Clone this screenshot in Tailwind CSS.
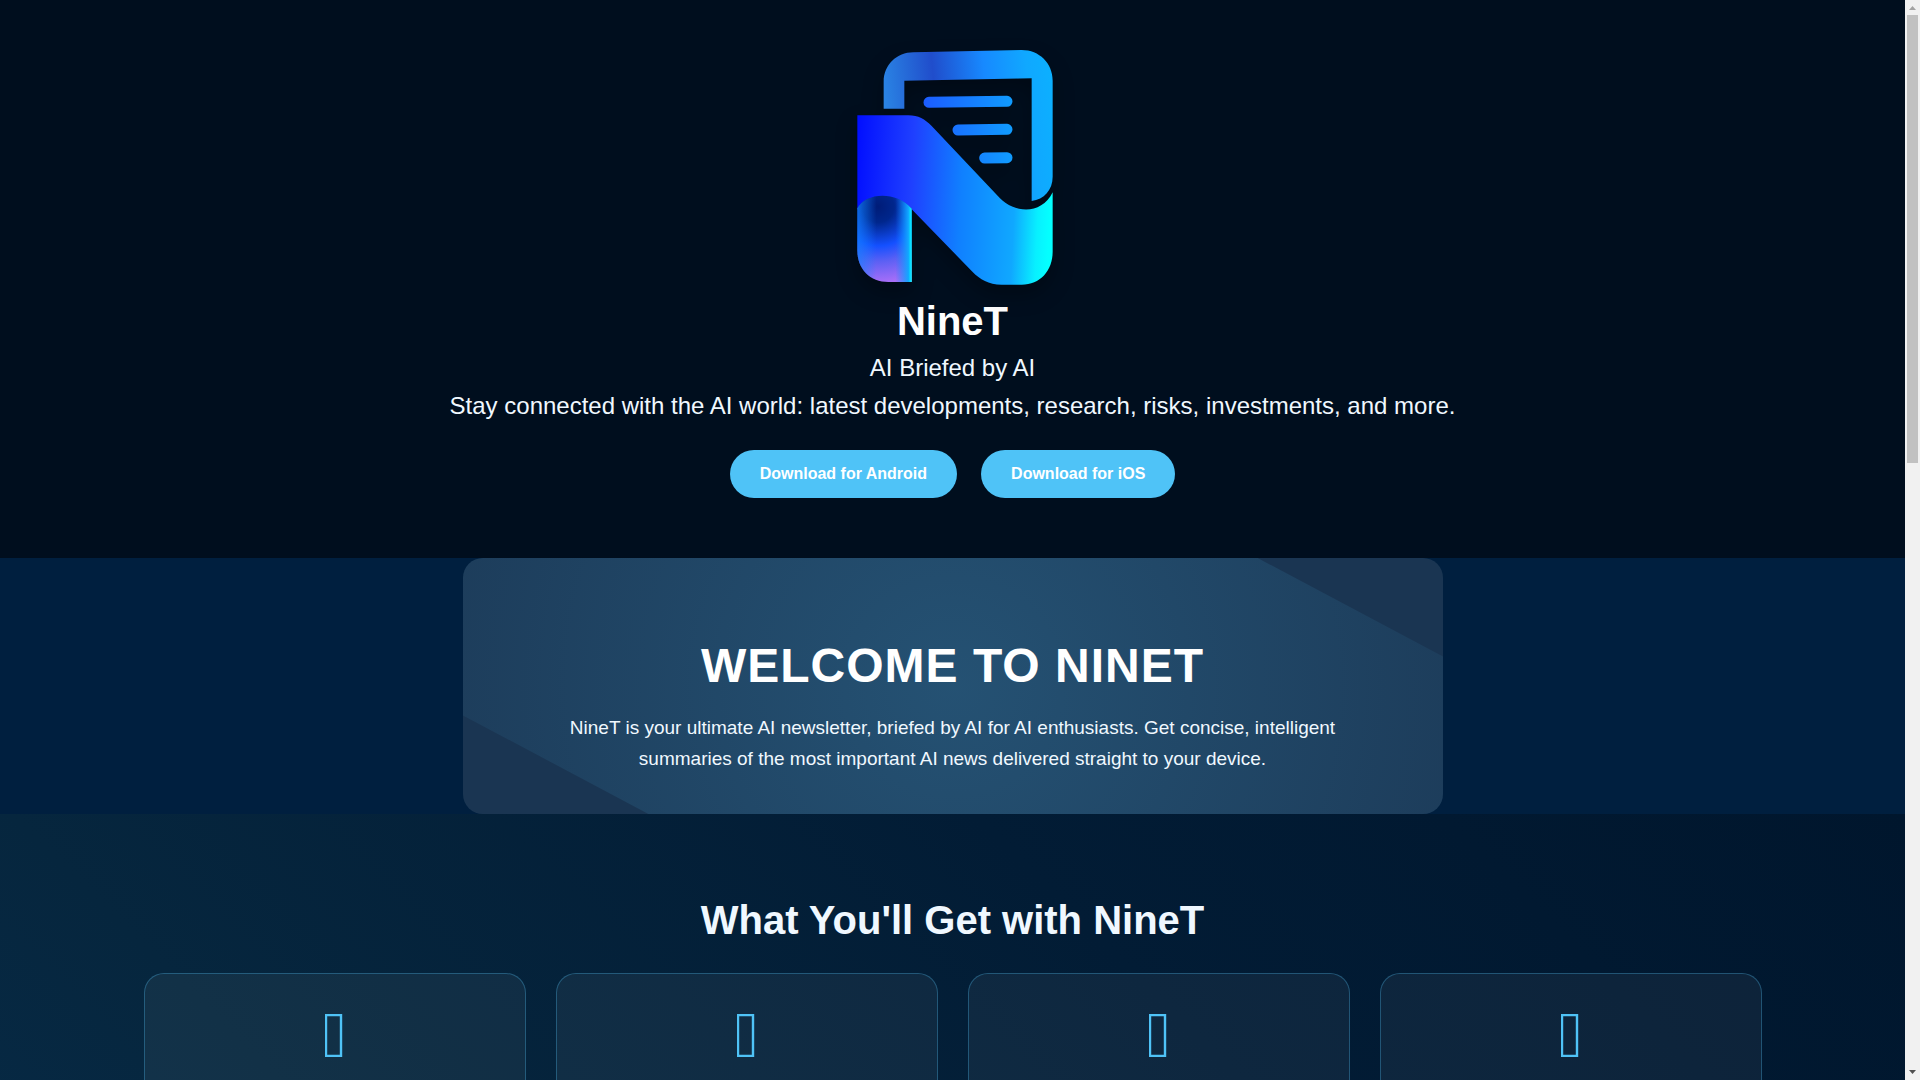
<!DOCTYPE html>
<html lang="en">
<head>
<meta charset="utf-8">
<meta name="viewport" content="width=device-width, initial-scale=1">
<title>NineT</title>
<script src="https://cdn.jsdelivr.net/npm/@tailwindcss/browser@4"></script>
</head>
<body class="h-screen overflow-hidden bg-[#001f3f] font-['Liberation_Sans',Arial,sans-serif] text-[#f0f8ff]">
<div class="flex h-full">
  <main class="min-w-0 flex-1 overflow-hidden text-center">
    <header class="flex flex-col items-center bg-[#000e1e] px-5 pt-10 pb-[60px]">
      <svg class="relative z-10 h-[255px] w-[230px] drop-shadow-[0_10px_10px_rgba(0,0,0,0.3)]" viewBox="-6 0 690 765" role="img" aria-label="NineT logo">
        <defs>
          <linearGradient id="page" x1="130" x2="638" y1="150" y2="100" gradientUnits="userSpaceOnUse">
            <stop offset="0" stop-color="#2a84e4"/><stop offset=".3" stop-color="#204dcb"/><stop offset=".6" stop-color="#1789ff"/><stop offset=".85" stop-color="#10a8ff"/><stop offset="1" stop-color="#0cb0ff"/>
          </linearGradient>
          <linearGradient id="ribbon" x1="40" x2="638" y1="330" y2="360" gradientUnits="userSpaceOnUse">
            <stop offset="0" stop-color="#000cff"/><stop offset=".3" stop-color="#1f40ff"/><stop offset=".55" stop-color="#1080ff"/><stop offset=".82" stop-color="#10a8ff"/><stop offset=".94" stop-color="#08f0ff"/><stop offset="1" stop-color="#04ffff"/>
          </linearGradient>
          <linearGradient id="lines" x1="250" x2="518" y1="0" y2="0" gradientUnits="userSpaceOnUse">
            <stop offset="0" stop-color="#1c5cff"/><stop offset="1" stop-color="#109cff"/>
          </linearGradient>
          <radialGradient id="leg" cx="115" cy="500" r="235" gradientUnits="userSpaceOnUse">
            <stop offset="0" stop-color="#001c78"/><stop offset=".2" stop-color="#00268c"/><stop offset=".5" stop-color="#1450ff"/><stop offset=".7" stop-color="#5c60f4"/><stop offset="1" stop-color="#b070f8"/>
          </radialGradient>
          <linearGradient id="rim" x1="52" x2="215" y1="0" y2="0" gradientUnits="userSpaceOnUse">
            <stop offset="0" stop-color="#1080ff" stop-opacity=".7"/><stop offset=".35" stop-color="#1080ff" stop-opacity="0"/><stop offset=".7" stop-color="#1080ff" stop-opacity="0"/><stop offset=".94" stop-color="#10a8ff"/><stop offset="1" stop-color="#04ffff"/>
          </linearGradient>
        </defs>
        <path d="M131 206V125C131 75 170 37 220 37L545 30C598 30 638 70 638 122V410C638 450 612 478 575 483V115L193 122V206Z" fill="url(#page)"/>
        <g stroke="url(#lines)" stroke-width="33" stroke-linecap="round" fill="none">
          <path d="M267 187L501 184"/><path d="M354 270L501 268"/><path d="M434 354L501 353"/>
        </g>
        <path d="M52 226H205C235 226 255 238 275 258L480 475C525 520 605 525 638 457V635C638 692 600 734 545 734H485C445 734 420 718 398 696L215 508C180 465 85 450 52 510Z" fill="url(#ribbon)"/>
        <path d="M52 505C75 460 165 450 215 506V726H145C90 726 52 688 52 630Z" fill="url(#leg)"/>
        <path d="M52 505C75 460 165 450 215 506V726H145C90 726 52 688 52 630Z" fill="url(#rim)"/>
      </svg>
      <h1 class="text-[40px] leading-[52px] font-bold text-white">NineT</h1>
      <p class="mt-0.5 text-2xl leading-[38px]">AI Briefed by AI</p>
      <p class="text-2xl leading-[38px]">Stay connected with the AI world: latest developments, research, risks, investments, and more.</p>
      <div class="mt-[25px] flex gap-6">
        <a href="#android" class="rounded-full bg-[#4fc3f7] px-[30px] py-3 font-bold text-white">Download for Android</a>
        <a href="#ios" class="rounded-full bg-[#4fc3f7] px-[30px] py-3 font-bold text-white">Download for iOS</a>
      </div>
    </header>

    <section class="bg-[#001f3f]">
      <div class="relative mx-auto max-w-[980px] overflow-hidden rounded-[20px] bg-white/10 px-[90px] pt-20 pb-10">
        <div class="absolute -top-1/2 -left-1/2 h-[200%] w-[200%] rotate-[28deg] bg-[radial-gradient(circle,rgba(79,195,247,0.2)_0%,transparent_70%)]"></div>
        <div class="relative">
          <h2 class="text-5xl leading-[56px] font-bold tracking-[1px] text-white uppercase">Welcome to NineT</h2>
          <p class="mt-[18px] text-[19px] leading-[31px]">NineT is your ultimate AI newsletter, briefed by AI for AI enthusiasts. Get concise, intelligent summaries of the most important AI news delivered straight to your device.</p>
        </div>
      </div>
    </section>

    <section class="h-[1200px] bg-[linear-gradient(45deg,#083052_0%,#06263e_39%,#021c35_70%,#00162d_100%)] pt-20">
      <h2 class="text-[40px] leading-[52px] font-bold">What You'll Get with NineT</h2>
      <div class="mx-auto mt-[27px] grid max-w-[1618px] grid-cols-4 gap-[30px]">
        <article class="flex h-[420px] justify-center rounded-[20px] border border-[#4fc3f7]/30 bg-white/5 pt-10">
          <svg class="h-[43px] w-5" viewBox="0 0 20 43" aria-hidden="true"><path d="M1 1H16V42H1Z" fill="none" stroke="#4fc3f7" stroke-width="2.400"/></svg>
        </article>
        <article class="flex h-[420px] justify-center rounded-[20px] border border-[#4fc3f7]/30 bg-white/5 pt-10">
          <svg class="h-[43px] w-5" viewBox="0 0 20 43" aria-hidden="true"><path d="M1 1H16V42H1Z" fill="none" stroke="#4fc3f7" stroke-width="2.400"/></svg>
        </article>
        <article class="flex h-[420px] justify-center rounded-[20px] border border-[#4fc3f7]/30 bg-white/5 pt-10">
          <svg class="h-[43px] w-5" viewBox="0 0 20 43" aria-hidden="true"><path d="M1 1H16V42H1Z" fill="none" stroke="#4fc3f7" stroke-width="2.400"/></svg>
        </article>
        <article class="flex h-[420px] justify-center rounded-[20px] border border-[#4fc3f7]/30 bg-white/5 pt-10">
          <svg class="h-[43px] w-5" viewBox="0 0 20 43" aria-hidden="true"><path d="M1 1H16V42H1Z" fill="none" stroke="#4fc3f7" stroke-width="2.400"/></svg>
        </article>
      </div>
    </section>
  </main>

  <div class="flex w-[15px] shrink-0 flex-col items-center justify-between bg-[#f1f1f1]" aria-hidden="true">
    <svg class="h-[15px] w-[15px]" viewBox="0 0 15 15"><path d="M4 10L7.500 6L11 10Z" fill="#a3a3a3"/></svg>
    <div class="w-[11px] flex-1"><div class="h-[448px] bg-[#c1c1c1]"></div></div>
    <svg class="h-[15px] w-[15px]" viewBox="0 0 15 15"><path d="M4 5L7.500 9L11 5Z" fill="#505050"/></svg>
  </div>
</div>
</body>
</html>
